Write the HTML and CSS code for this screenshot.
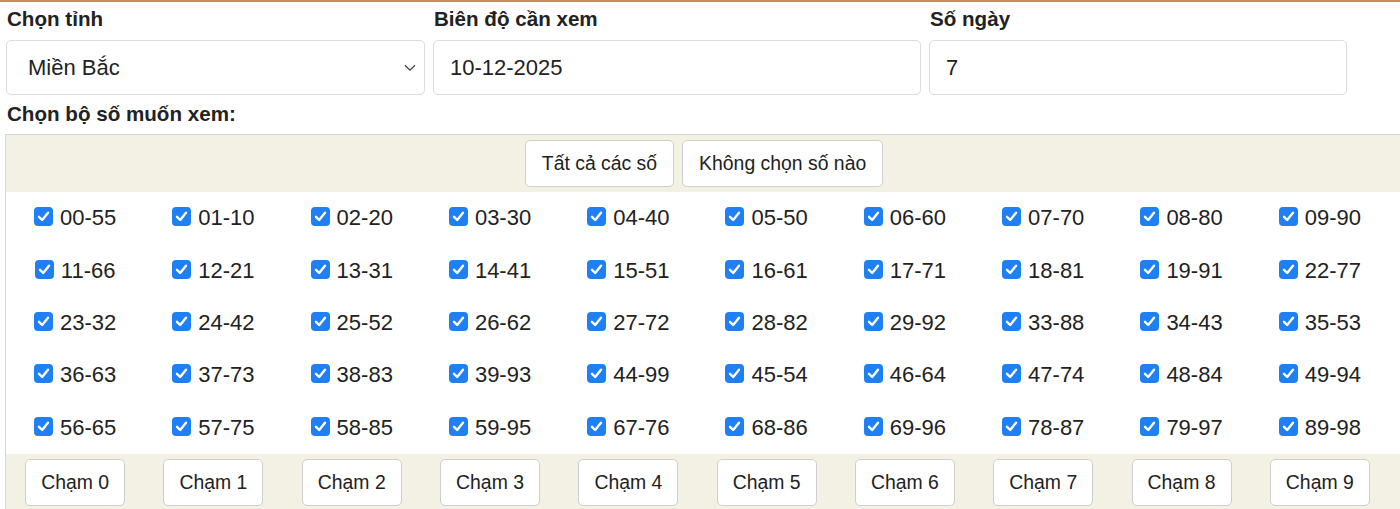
FILE: index.html
```html
<!DOCTYPE html>
<html lang="vi">
<head>
<meta charset="utf-8">
<title>Chọn bộ số</title>
<link rel="stylesheet" href="styles.css">
</head>
<body>
<div class="page">
  <div class="filters">
    <div class="field f1">
      <label class="lbl">Chọn tỉnh</label>
      <div class="select-wrap">
        <select class="ctrl sel"><option>Miền Bắc</option></select>
        <svg class="chev" width="12" height="8" viewBox="0 0 12 8"><path d="M1 1.2 L6 6.2 L11 1.2" fill="none" stroke="#444" stroke-width="1.3"/></svg>
      </div>
    </div>
    <div class="field f2">
      <label class="lbl">Biên độ cần xem</label>
      <input class="ctrl inp" type="text" value="10-12-2025">
    </div>
    <div class="field f3">
      <label class="lbl">Số ngày</label>
      <input class="ctrl inp" type="text" value="7">
    </div>
  </div>
  <div class="lbl lbl2">Chọn bộ số muốn xem:</div>
  <div class="panel">
    <div class="bar top">
      <button class="btn">Tất cả các số</button>
      <button class="btn">Không chọn số nào</button>
    </div>
    <div class="grid" id="grid"></div>
    <div class="bar bottom" id="cham"></div>
  </div>
</div>
<script src="app.js"></script>
</body>
</html>
```

FILE: app.js
```js
var pairs = ["00-55","01-10","02-20","03-30","04-40","05-50","06-60","07-70","08-80","09-90",
"11-66","12-21","13-31","14-41","15-51","16-61","17-71","18-81","19-91","22-77",
"23-32","24-42","25-52","26-62","27-72","28-82","29-92","33-88","34-43","35-53",
"36-63","37-73","38-83","39-93","44-99","45-54","46-64","47-74","48-84","49-94",
"56-65","57-75","58-85","59-95","67-76","68-86","69-96","78-87","79-97","89-98"];
var grid = document.getElementById('grid');
var html = '';
pairs.forEach(function (p) {
  html += '<label class="item"><span class="cb"><svg width="19" height="19" viewBox="0 0 19 19"><path d="M5 9.8 L8.2 13 L14 5.8" fill="none" stroke="#fff" stroke-width="2.4" stroke-linecap="round" stroke-linejoin="round"/></svg></span><span class="txt">' + p + '</span></label>';
});
grid.innerHTML = html;
var cham = document.getElementById('cham');
var h2 = '';
for (var i = 0; i < 10; i++) {
  h2 += '<div class="cell"><button class="btn cbtn">Chạm ' + i + '</button></div>';
}
cham.innerHTML = h2;
```

FILE: styles.css
```css
html, body {
  margin: 0;
  padding: 0;
  background: #fff;
  overflow: hidden;
}
body {
  font-family: "Liberation Sans", Arial, sans-serif;
  color: #222;
  border-top: 2px solid #c98a62;
}
.page {
  width: 1400px;
}
.filters {
  display: flex;
  gap: 8px;
  padding-left: 6px;
}
.field {
  display: flex;
  flex-direction: column;
}
.f1 { width: 419px; }
.f2 { width: 488px; }
.f3 { width: 418px; }
.lbl {
  display: block;
  font-size: 20.6px;
  font-weight: bold;
  line-height: 24px;
  margin-top: 5px;
  margin-bottom: 9px;
  padding-left: 1px;
  color: #222;
}
.select-wrap {
  position: relative;
}
.ctrl {
  box-sizing: border-box;
  width: 100%;
  height: 55px;
  border: 1px solid #dcdcdc;
  border-radius: 5px;
  background: #fff;
  font-family: "Liberation Sans", Arial, sans-serif;
  font-size: 22px;
  color: #222;
  outline: none;
  margin: 0;
}
.sel {
  appearance: none;
  -webkit-appearance: none;
  padding: 0 40px 0 21px;
}
.inp {
  padding: 0 16px;
}
.chev {
  position: absolute;
  right: 9px;
  top: 24px;
}
.lbl2 {
  margin: 7px 0 8px 6px;
}
.panel {
  margin-left: 5px;
  width: 1396px;
  border: 1px solid #d6d6d6;
  border-bottom: none;
}
.bar {
  background: #f3f0e4;
  padding: 5px 0;
}
.top {
  display: flex;
  justify-content: center;
  gap: 8px;
}
.btn {
  box-sizing: border-box;
  height: 47px;
  padding: 0 16px;
  border: 1px solid #cfcfcf;
  border-radius: 5px;
  background: #fff;
  font-family: "Liberation Sans", Arial, sans-serif;
  font-size: 19.4px;
  color: #222;
  margin: 0;
}
.grid {
  display: grid;
  grid-template-columns: repeat(10, 138.3px);
  grid-auto-rows: 52.4px;
}
.item {
  display: flex;
  align-items: center;
  justify-content: center;
  gap: 7px;
}
.cb {
  width: 19px;
  height: 19px;
  border-radius: 4px;
  background: #1f7ff4;
  display: block;
  margin-top: -3px;
}
.cb svg {
  display: block;
}
.txt {
  font-size: 22px;
  line-height: 26px;
  color: #222;
}
.bottom {
  display: grid;
  grid-template-columns: repeat(10, 138.3px);
}
.cell {
  display: flex;
  justify-content: center;
}
.cbtn {
  width: 100px;
  padding: 0;
}
```
